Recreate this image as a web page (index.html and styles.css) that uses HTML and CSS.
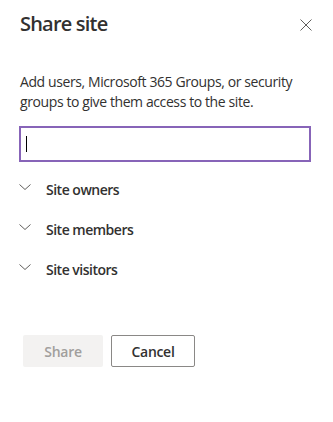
FILE: index.html
```html
<!DOCTYPE html>
<html lang="en">
<head>
  <meta charset="utf-8">
  <meta name="viewport" content="width=device-width, initial-scale=1">
  <title>Share site</title>
  <link rel="stylesheet" href="styles.css">
</head>
<body>
  <div class="panel">
    <div class="panel-header">
      <h1 class="panel-title">Share site</h1>
      <button class="close-btn" aria-label="Close">
        <svg width="12" height="12" viewBox="0 0 12 12"><path d="M0.5 0.5 L11.5 11.5 M11.5 0.5 L0.5 11.5" stroke="#605e5c" stroke-width="1" fill="none"/></svg>
      </button>
    </div>

    <p class="desc">Add users, Microsoft 365 Groups, or security groups to give them access to the site.</p>

    <div class="picker"><span class="caret"></span></div>

    <div class="groups">
      <div class="group-row">
        <svg class="chev" width="12" height="8" viewBox="0 0 12 8"><path d="M0.5 1.5 L6 6.5 L11.5 1.5" stroke="#605e5c" stroke-width="1" fill="none"/></svg>
        <span class="group-name">Site owners</span>
      </div>
      <div class="group-row">
        <svg class="chev" width="12" height="8" viewBox="0 0 12 8"><path d="M0.5 1.5 L6 6.5 L11.5 1.5" stroke="#605e5c" stroke-width="1" fill="none"/></svg>
        <span class="group-name">Site members</span>
      </div>
      <div class="group-row">
        <svg class="chev" width="12" height="8" viewBox="0 0 12 8"><path d="M0.5 1.5 L6 6.5 L11.5 1.5" stroke="#605e5c" stroke-width="1" fill="none"/></svg>
        <span class="group-name">Site visitors</span>
      </div>
    </div>

    <div class="actions">
      <button class="btn btn-primary" disabled>Share</button>
      <button class="btn btn-default">Cancel</button>
    </div>
  </div>
</body>
</html>
```

FILE: styles.css
```css
:root {
  --text: #323130;
  --muted: #605e5c;
  --accent: #8764b8;
  --disabled-bg: #f3f2f1;
  --disabled-text: #a19f9d;
}
* { box-sizing: border-box; }
body {
  margin: 0;
  background: #fff;
  color: var(--text);
  font-family: 'Segoe UI', 'Open Sans', sans-serif;
}
.panel {
  padding: 10px 22px 0 20px;
}
.panel-header {
  display: flex;
  justify-content: space-between;
  align-items: center;
  height: 28px;
}
.panel-title {
  margin: 0;
  font-size: 20px;
  font-weight: 600;
  line-height: 28px;
  letter-spacing: -0.8px;
}
.close-btn {
  border: none;
  background: none;
  padding: 0;
  width: 12px;
  height: 12px;
  margin-right: -1px;
  margin-top: 2px;
  display: flex;
}
.desc {
  margin: 34px 0 0;
  font-size: 14px;
  line-height: 20px;
  letter-spacing: -0.4px;
}
.picker {
  margin: 14px 0 0 -1px;
  height: 36px;
  border: 2px solid var(--accent);
  display: flex;
  align-items: center;
}
.caret {
  width: 1px;
  height: 16px;
  background: #000;
  margin-left: 5px;
}
.groups {
  margin-top: 7px;
}
.group-row {
  display: flex;
  align-items: center;
  height: 40px;
}
.chev {
  margin-left: -1px;
  margin-top: -4px;
}
.group-name {
  margin-left: 15px;
  font-size: 14px;
  font-weight: 600;
  letter-spacing: -0.5px;
}
.actions {
  display: flex;
  gap: 8px;
  margin: 46px 0 0 3px;
}
.btn {
  height: 32px;
  border-radius: 2px;
  font-family: inherit;
  font-size: 14px;
  font-weight: 600;
  letter-spacing: -0.3px;
  padding: 0 16px;
}
.btn-primary {
  width: 80px;
  border: none;
  background: var(--disabled-bg);
  color: var(--disabled-text);
}
.btn-default {
  width: 84px;
  border: 1px solid #8a8886;
  background: #fff;
  color: var(--text);
}
```
